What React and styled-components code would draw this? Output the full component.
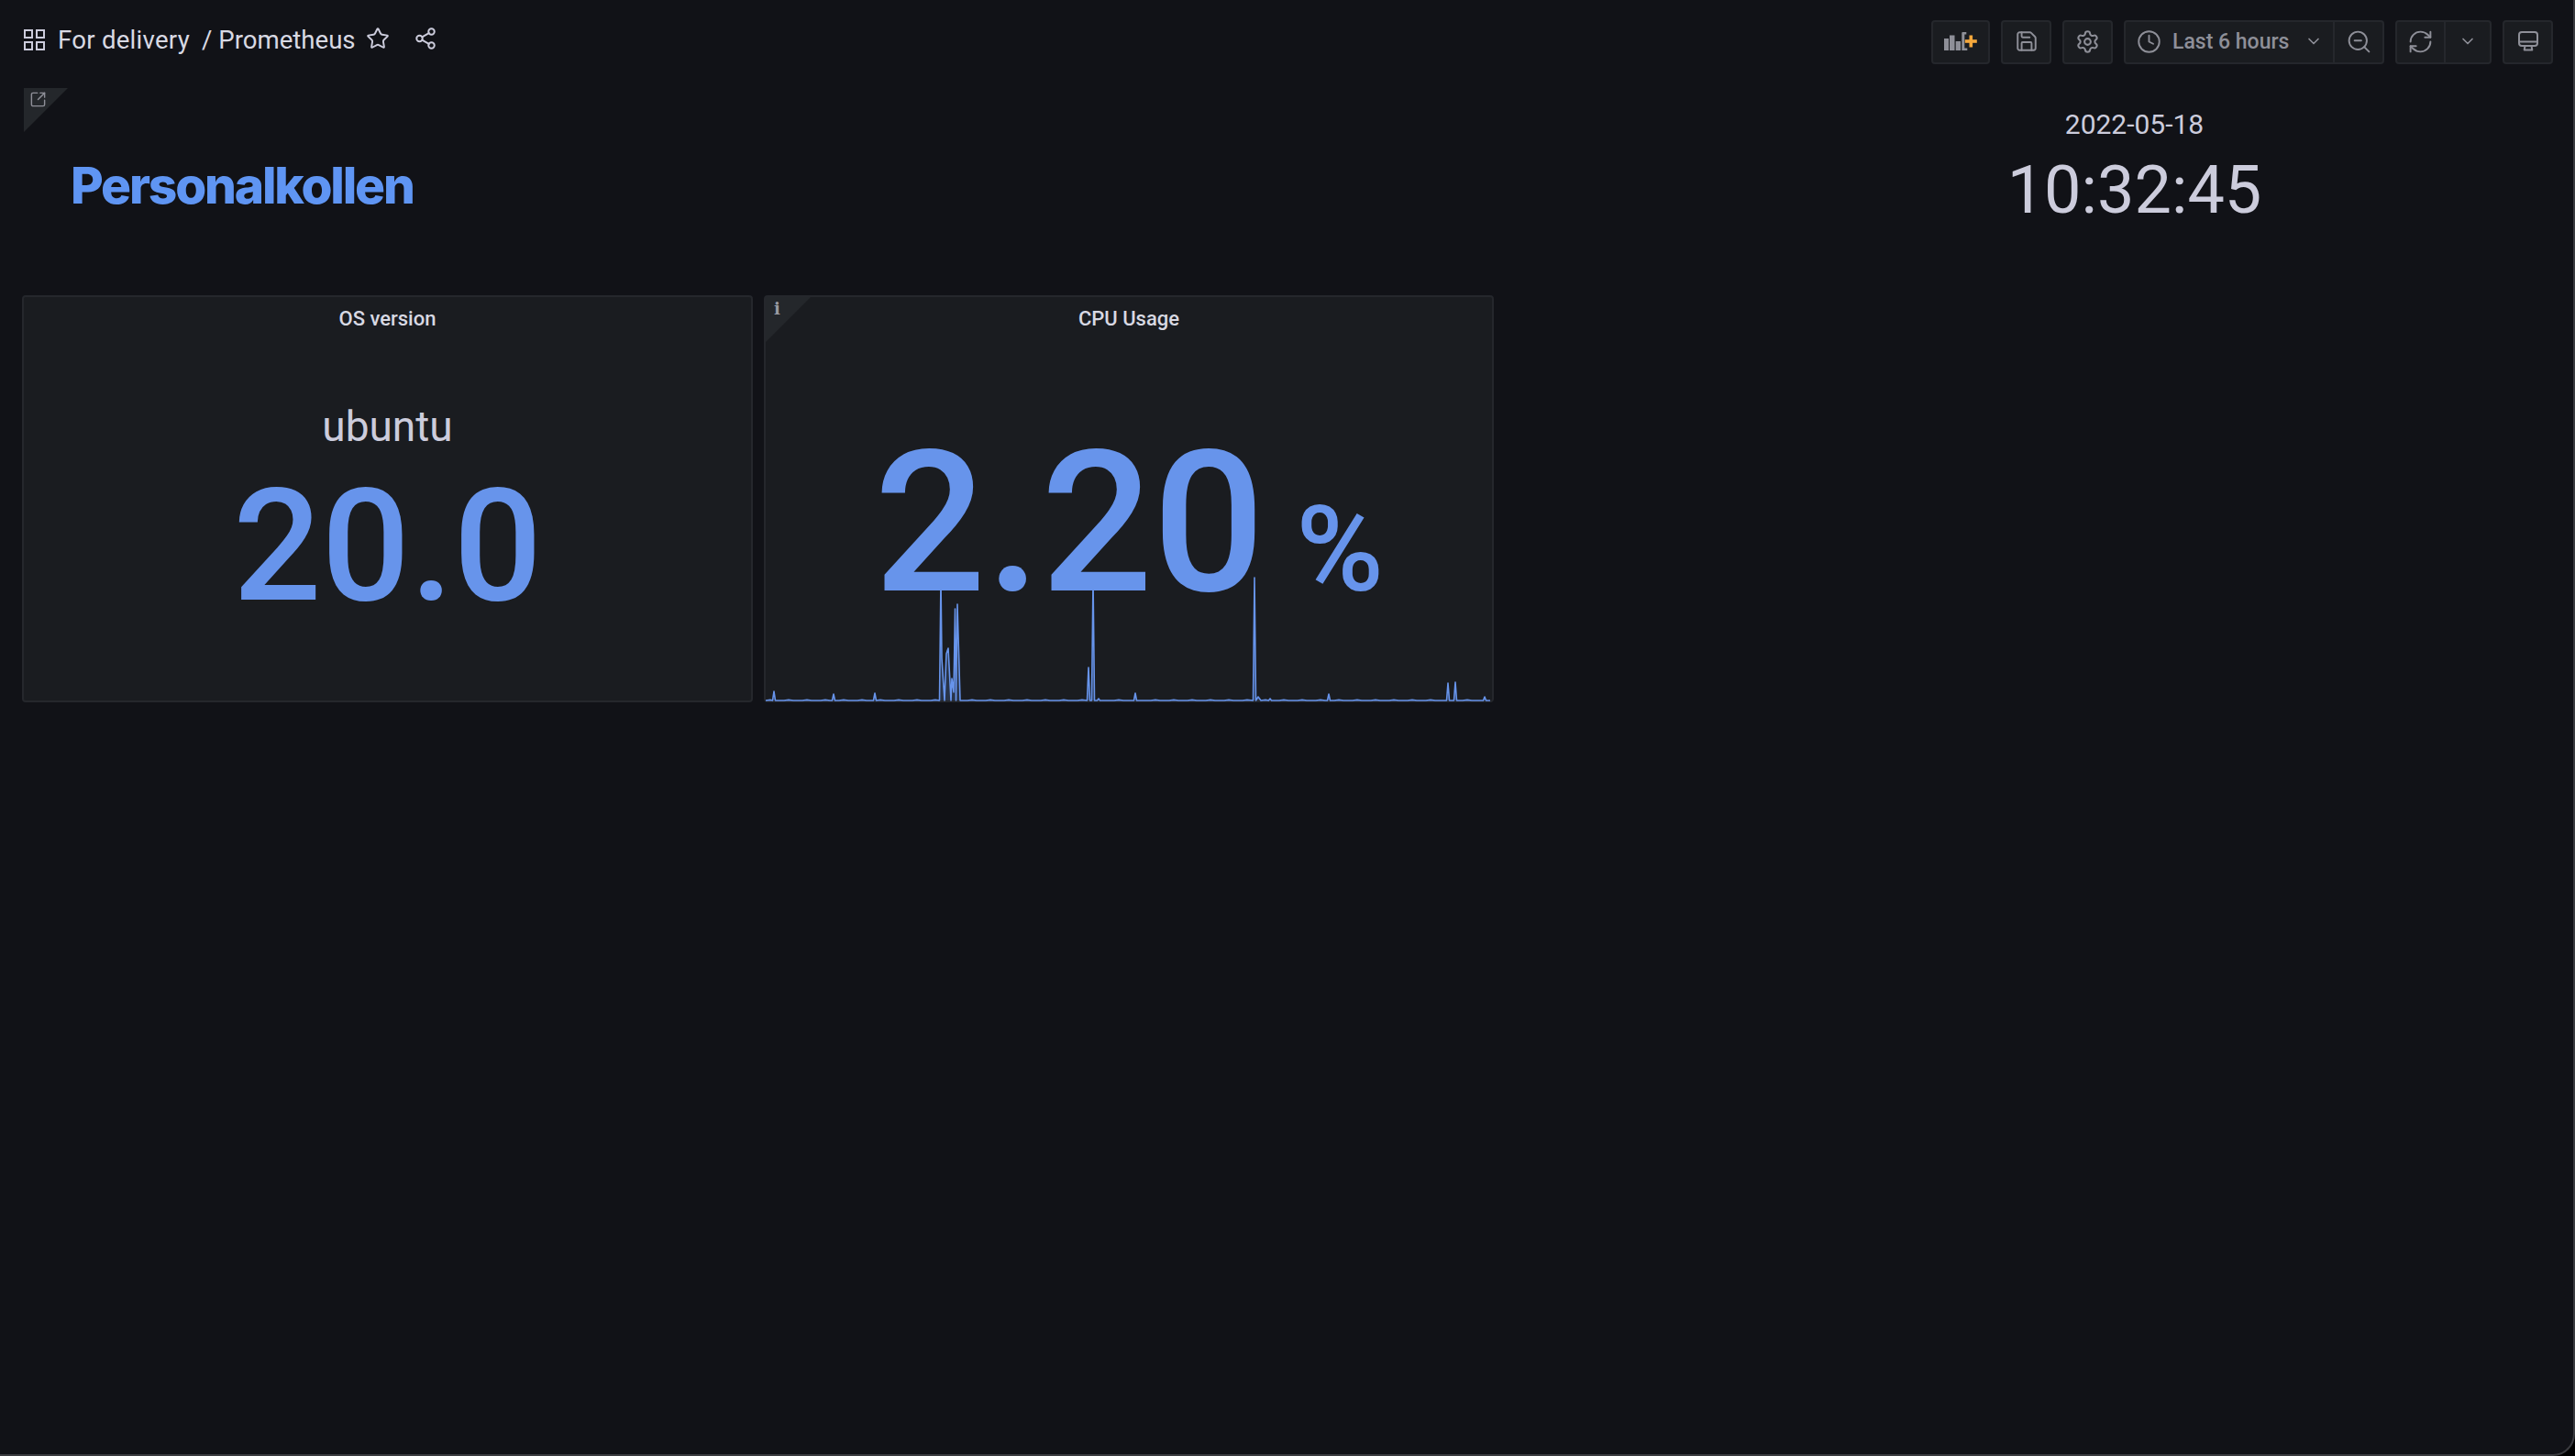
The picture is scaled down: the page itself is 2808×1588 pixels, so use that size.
import React from "react"
import styled, { createGlobalStyle } from "styled-components"
import { Star, Share2, SquareArrowOutUpRight, Save, Settings, Clock, ChevronDown, ZoomOut, RefreshCw } from "lucide-react"

const GlobalStyle = createGlobalStyle`
  html, body {
    margin: 0;
    padding: 0;
    background: #000;
  }
  body {
    font-family: Roboto, "Liberation Sans", sans-serif;
    color: #ccccdc;
  }
`

const Frame = styled.div`
  box-sizing: border-box;
  width: 2808px;
  height: 1588px;
  overflow: hidden;
  background: #111217;
  border-right: 2px solid #3a3b3f;
  border-bottom: 2px solid #3a3b3f;
  border-bottom-right-radius: 24px;
`

const Toolbar = styled.header`
  display: flex;
  align-items: center;
  justify-content: space-between;
  padding: 22px 22px 0 26px;
  height: 48px;
`

const Crumbs = styled.div`
  display: flex;
  align-items: center;
  margin-bottom: 4px;
  color: #d8d9e3;
  font-size: 27.6px;
  line-height: 48px;
`

const AppsIcon = styled.svg`
  width: 23px;
  height: 23px;
  margin: -2px 14px 0 0;
  fill: none;
  stroke: #ccccdc;
  stroke-width: 2;
`

const Crumb = styled.span`
  margin-right: ${props => props.$gap || 0}px;
  letter-spacing: ${props => props.$track || 0}px;
`

const TitleIcon = styled.span`
  display: flex;
  color: #ccccdc;
  margin-left: ${props => props.$left}px;
  margin-top: -4px;
`

const Actions = styled.div`
  display: flex;
  align-items: center;
  gap: 12px;
`

const Group = styled.div`
  display: flex;
`

const ToolButton = styled.div`
  box-sizing: border-box;
  display: flex;
  align-items: center;
  justify-content: center;
  width: ${props => props.$width}px;
  height: 48px;
  padding-bottom: 2px;
  margin-left: ${props => (props.$joined ? -2 : 0)}px;
  background: #1a1c20;
  border: 2px solid #25272c;
  border-radius: ${props => (props.$joined ? "0 4px 4px 0" : props.$first ? "4px 0 0 4px" : "4px")};
  color: #8e8f98;
`

const RangeButton = styled(ToolButton)`
  justify-content: flex-start;
  padding-left: 12px;
`

const RangeLabel = styled.span`
  margin: 0 17px 0 12px;
  font-size: 23px;
  font-weight: 500;
  color: #8e8f98;
`

const Dashboard = styled.main`
  padding: 26px 24px 0 24px;
`

const TopRow = styled.section`
  display: flex;
  justify-content: space-between;
  height: 226px;
`

const TextPanel = styled.div`
  position: relative;
  width: 797px;
  padding: 73px 0 0 53px;
`

const Corner = styled.div`
  position: absolute;
  top: ${props => props.$top}px;
  left: ${props => props.$left}px;
  width: ${props => props.$size}px;
  height: ${props => props.$size}px;
  background: #24272b;
  clip-path: polygon(0 0, 100% 0, 0 100%);
  color: #8e8f98;
`

const CornerGlyph = styled.span`
  position: absolute;
  top: 3px;
  left: 6px;
  display: flex;
`

const InfoGlyph = styled.span`
  position: absolute;
  top: 3px;
  left: 9px;
  font-family: "DejaVu Serif", serif;
  font-size: 18px;
  font-weight: 700;
  line-height: 20px;
  color: #9a9ba3;
`

const Heading = styled.h1`
  margin: 0;
  font-family: Inter, "Open Sans", sans-serif;
  font-size: 55px;
  font-weight: 800;
  letter-spacing: -2.2px;
  line-height: 66px;
  color: #5f95f3;
`

const ClockPanel = styled.div`
  box-sizing: border-box;
  display: flex;
  flex-direction: column;
  align-items: center;
  width: 912px;
  padding-left: 3px;
`

const ClockDate = styled.div`
  margin-top: 22px;
  font-size: 30px;
  line-height: 36px;
  color: #ccccdc;
`

const ClockTime = styled.div`
  margin-top: 11px;
  font-size: 72px;
  line-height: 86px;
  color: #ccccdc;
`

const PanelRow = styled.section`
  display: flex;
  gap: 12px;
`

const Panel = styled.article`
  position: relative;
  box-sizing: border-box;
  display: flex;
  flex-direction: column;
  width: ${props => props.$width}px;
  height: 444px;
  background: #1a1c20;
  border: 2px solid #25272c;
  border-radius: 4px;
`

const PanelTitle = styled.h2`
  margin: 11px 0 0;
  text-align: center;
  font-size: 22px;
  font-weight: 500;
  line-height: 26px;
  color: #d8d9e3;
`

const Stat = styled.div`
  position: relative;
  display: flex;
  flex-direction: column;
  align-items: center;
  padding-top: ${props => props.$top}px;
`

const StatName = styled.div`
  font-size: 46px;
  line-height: 56px;
  color: #ccccdc;
`

const StatValue = styled.div`
  display: flex;
  align-items: baseline;
  font-size: ${props => props.$size}px;
  font-weight: 500;
  line-height: ${props => props.$line}px;
  color: #6794eb;
`

const StatUnit = styled.span`
  margin-left: 34px;
  font-size: 130px;
`

const Spark = styled.svg`
  position: absolute;
  left: 0;
  bottom: 0;
  width: 792px;
  height: 180px;
  display: block;
  overflow: visible;
`

// x, y in page pixels, read off the reference
const SPIKES = [
  [844, 754], [909, 757], [954, 756],
  [1024.5, 764], [1026, 632], [1027, 718], [1030, 764], [1032, 713], [1034, 707], [1037, 764],
  [1038, 740], [1040, 755], [1041.5, 664], [1042.5, 764], [1044, 659], [1047, 764],
  [1185.5, 764], [1187, 728], [1188.5, 764], [1190.5, 764], [1192, 632], [1193.5, 764],
  [1198, 762], [1238, 756],
  [1366.5, 764], [1368, 630], [1369.5, 764], [1372, 760], [1385, 762], [1449, 757],
  [1579, 745], [1587, 744], [1619, 760],
]

const buildLine = () => {
  const pts = []
  const isNearSpike = x => SPIKES.some(([sx]) => Math.abs(sx - x) < 3)
  for (let x = 835; x <= 1628; x += 5) {
    if (!isNearSpike(x)) pts.push([x, x % 4 === 0 ? 763.4 : 764])
  }
  SPIKES.forEach(([sx, sy]) => {
    pts.push([sx, sy])
    if (sy < 764 && !SPIKES.some(([ox]) => ox !== sx && Math.abs(ox - sx) < 3)) {
      pts.push([sx - 1.5, 764], [sx + 1.5, 764])
    }
  })
  pts.sort((a, b) => a[0] - b[0])
  return pts.map(([x, y]) => `${x - 835},${y - 584}`).join(" ")
}

const AddPanelIcon = () => (
  <svg width="36" height="20" viewBox="0 0 36 20">
    <rect x="0" y="7" width="5" height="13" fill="#8e8f98" />
    <rect x="6" y="3.5" width="5.5" height="16.5" fill="#8e8f98" />
    <rect x="12.7" y="10" width="5.3" height="10" fill="#8e8f98" />
    <path d="M19.3 20V1q0-1 1-1h4v2.5h-2v15h3V20z" fill="#8e8f98" />
    <rect x="27.5" y="3.5" width="3.6" height="13" fill="#f5a83c" />
    <rect x="22.8" y="8.2" width="13" height="3.6" fill="#f5a83c" />
  </svg>
)

const MonitorIcon = () => (
  <svg width="24" height="24" viewBox="0 0 24 24" fill="none" stroke="currentColor" strokeWidth="2" strokeLinejoin="round">
    <rect x="2" y="2" width="20" height="15" rx="3" />
    <path d="M2 12.5h20M8.5 17l-.8 4.5h8.6l-.8-4.5" />
  </svg>
)

const App = () => (
  <Frame>
    <GlobalStyle />
    <Toolbar>
      <Crumbs>
        <AppsIcon viewBox="0 0 23 23">
          <rect x="1" y="1" width="8" height="8" />
          <rect x="14" y="1" width="8" height="8" />
          <rect x="1" y="14" width="8" height="8" />
          <rect x="14" y="14" width="8" height="8" />
        </AppsIcon>
        <Crumb $gap={13} $track={0.25}>For delivery</Crumb>
        <Crumb>/ Prometheus</Crumb>
        <TitleIcon $left={11}><Star size={26} strokeWidth={1.8} /></TitleIcon>
        <TitleIcon $left={26}><Share2 size={26} strokeWidth={1.8} /></TitleIcon>
      </Crumbs>
      <Actions>
        <ToolButton $width={64}><AddPanelIcon /></ToolButton>
        <ToolButton $width={55}><Save size={26} strokeWidth={1.8} /></ToolButton>
        <ToolButton $width={55}><Settings size={27} strokeWidth={1.8} /></ToolButton>
        <Group>
          <RangeButton $width={230} $first>
            <Clock size={27} strokeWidth={1.7} />
            <RangeLabel>Last 6 hours</RangeLabel>
            <ChevronDown size={20} strokeWidth={2} />
          </RangeButton>
          <ToolButton $width={56} $joined><ZoomOut size={29} strokeWidth={1.6} /></ToolButton>
        </Group>
        <Group>
          <ToolButton $width={55} $first><RefreshCw size={29} strokeWidth={1.6} /></ToolButton>
          <ToolButton $width={52} $joined><ChevronDown size={20} strokeWidth={2} /></ToolButton>
        </Group>
        <ToolButton $width={55}><MonitorIcon /></ToolButton>
      </Actions>
    </Toolbar>
    <Dashboard>
      <TopRow>
        <TextPanel>
          <Corner $top={0} $left={2} $size={48}>
            <CornerGlyph><SquareArrowOutUpRight size={19} strokeWidth={1.8} /></CornerGlyph>
          </Corner>
          <Heading>Personalkollen</Heading>
        </TextPanel>
        <ClockPanel>
          <ClockDate>2022-05-18</ClockDate>
          <ClockTime>10:32:45</ClockTime>
        </ClockPanel>
      </TopRow>
      <PanelRow>
        <Panel $width={797}>
          <PanelTitle>OS version</PanelTitle>
          <Stat $top={76}>
            <StatName>ubuntu</StatName>
            <StatValue $size={170} $line={206}>20.0</StatValue>
          </Stat>
        </Panel>
        <Panel $width={796}>
          <Spark viewBox="0 0 792 180">
            <polyline points={buildLine()} fill="#6794eb" fillOpacity="0.2" stroke="#6794eb" strokeWidth="1.6" strokeLinejoin="round" />
          </Spark>
          <Corner $top={0} $left={0} $size={49}>
            <InfoGlyph>i</InfoGlyph>
          </Corner>
          <PanelTitle>CPU Usage</PanelTitle>
          <Stat $top={90}>
            <StatValue $size={215} $line={240}>
              2.20<StatUnit>%</StatUnit>
            </StatValue>
          </Stat>
        </Panel>
      </PanelRow>
    </Dashboard>
  </Frame>
)

export default App
